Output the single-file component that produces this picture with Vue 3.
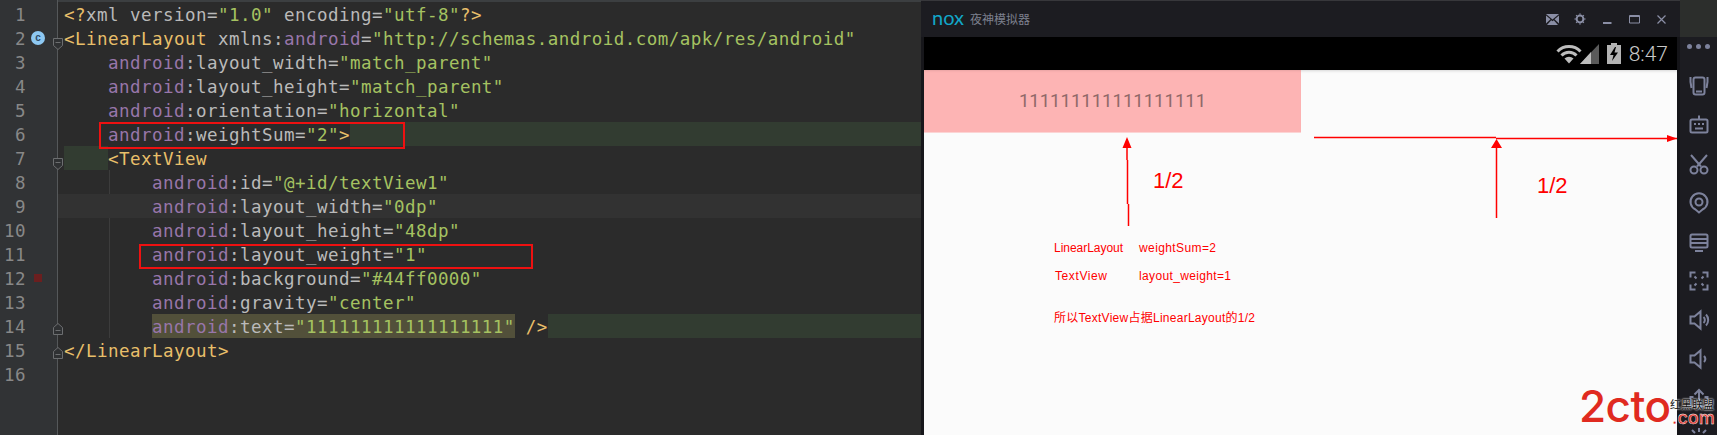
<script setup>
const a = 'android'
const attr = (name, value) => [['at', a], ['pl', ':' + name + '='], ['st', '"' + value + '"']]
const lines = [
  { t: [['tg', '<?'], ['pl', 'xml version='], ['st', '"1.0"'], ['pl', ' encoding='], ['st', '"utf-8"'], ['tg', '?>']] },
  { t: [['tg', '<LinearLayout'], ['pl', ' xmlns:'], ['at', a], ['pl', '='], ['st', '"http://schemas.android.com/apk/res/android"']] },
  { i: 4, t: attr('layout_width', 'match_parent') },
  { i: 4, t: attr('layout_height', 'match_parent') },
  { i: 4, t: attr('orientation', 'horizontal') },
  { i: 4, t: [...attr('weightSum', '2'), ['tg', '>']], fill: true },
  { i: 4, mark: true, t: [['tg', '<TextView']] },
  { i: 8, t: attr('id', '@+id/textView1') },
  { i: 8, t: attr('layout_width', '0dp'), caret: true },
  { i: 8, t: attr('layout_height', '48dp') },
  { i: 8, t: attr('layout_weight', '1') },
  { i: 8, t: attr('background', '#44ff0000') },
  { i: 8, t: attr('gravity', 'center') },
  { i: 8, t: attr('text', '111111111111111111'), olive: true, tail: ' />', fill: true },
  { t: [['tg', '</LinearLayout>']] },
  { t: [] }
]
const sidebar = ['vibrate', 'robot', 'scissors', 'pin', 'screen', 'full', 'volup', 'voldown', 'upload', 'shake']
</script>

<template>
  <div class="root">
    <section class="editor">
      <div class="gutter">
        <div v-for="(l, n) in lines" :key="n" class="num">
          <span class="num-text">{{ n + 1 }}</span>
          <span v-if="n === 1" class="class-badge">c</span>
          <span v-if="n === 11" class="swatch"></span>
          <svg v-if="n === 1 || n === 6" class="fold" viewBox="0 0 10 12"><path d="M.5.5h9v7L5 11.5.5 7.5z M2.5 4.5h5" /></svg>
          <svg v-if="n === 13 || n === 14" class="fold fold-end" viewBox="0 0 10 12"><path d="M.5 11.5h9v-7L5 .5.5 4.5z M2.5 7.5h5" /></svg>
        </div>
      </div>
      <div class="code">
        <span class="guide"></span>
        <div v-for="(l, n) in lines" :key="n" class="row" :class="{ caret: l.caret }">
          <span v-if="l.i" class="indent" :class="{ green: l.mark }">{{ ' '.repeat(l.i) }}</span>
          <span :class="{ olive: l.olive }"><span v-for="(tok, k) in l.t" :key="k" :class="tok[0]">{{ tok[1] }}</span></span>
          <span v-if="l.tail" class="tg">{{ l.tail }}</span>
          <span v-if="l.fill" class="fill"></span>
        </div>
        <span class="redbox box-one"></span>
        <span class="redbox box-two"></span>
      </div>
    </section>

    <section class="emu">
      <div class="top">
        <header class="titlebar">
          <span class="nox">nox</span>
          <span class="title">夜神模拟器</span>
          <div class="controls">
            <svg class="mail" width="13" height="11" viewBox="0 0 13 11"><path class="solid" d="M0 0h13L6.5 5.5zM0 1.5v8l4.5-4.2zM13 1.5v8L8.500 5.300zM1 11h11L7.800 6.300 6.500 7.300 5.200 6.300z" /></svg>
            <svg width="12" height="12" viewBox="0 0 12 12"><circle cx="6" cy="6" r="3.400" class="line" stroke-width="2" /><path class="line" stroke-width="1.500" stroke-dasharray="1.500 1.200" d="M6 .6v1M6 10.400v1M.6 6h1M10.400 6h1M2.200 2.200l.8.8M9 9l.8.800M2.200 9.800L3 9M9 3l.8-.8" /></svg>
            <svg width="9" height="9" viewBox="0 0 9 9"><path class="solid" d="M0 7h8.500v2H0z" /></svg>
            <svg width="11" height="9" viewBox="0 0 11 9"><path class="line" stroke-width="1" d="M.5.500h10v7.500H.500z M.5 1.500h10" /></svg>
            <svg width="9" height="9" viewBox="0 0 9 9"><path class="line" stroke-width="1.200" d="M.5.500l8 8M8.500.500l-8 8" /></svg>
          </div>
        </header>
        <div class="corner"></div>
      </div>
      <div class="body">
        <div class="edge"></div>
        <main class="device">
          <div class="status">
            <svg width="26" height="20" viewBox="0 0 26 20">
              <path class="wifi" d="M1.500 7.500a16 16 0 0 1 23 0M5.500 11.500a10.500 10.500 0 0 1 15 0" />
              <path class="wifi-fill" d="M13 19.500l-4.500-5a6.500 6.500 0 0 1 9 0z" />
            </svg>
            <svg class="signal" width="20" height="20" viewBox="0 0 20 20">
              <path fill="#5a5a5a" d="M19 0v20H0z" />
              <path fill="#bdbdbd" d="M11 8v12H0z" />
            </svg>
            <svg class="battery" width="14" height="21" viewBox="0 0 14 21">
              <path fill="#b4b4b4" d="M4 0h6v2h4v19H0V2h4z" />
              <path fill="#000" d="M8 4L3 12h3.500L5 18l6-8.500H7.500L9 4z" />
            </svg>
            <span class="clock">8:47</span>
          </div>
          <div class="screen">
            <div class="pink"><span>111111111111111111</span></div>
            <svg class="notes" viewBox="924 70 753 365" width="753" height="365">
              <g class="arrow">
                <path d="M1127 146v14M1127.500 160v44M1128.500 204v22M1314 137.500h182M1496 138.500h181M1496.500 147v71" />
              </g>
              <path class="head" d="M1127 137l4.500 11h-9zM1496.500 139l5.500 9h-11zM1677 138.500l-10 3.500v-7z" />
              <text class="big" x="1153" y="188">1/2</text>
              <text class="big" x="1537" y="193">1/2</text>
              <text class="small" x="1054" y="252" textLength="69">LinearLayout</text>
              <text class="small" x="1139" y="252" textLength="77">weightSum=2</text>
              <text class="small" x="1055" y="280" textLength="52">TextView</text>
              <text class="small" x="1139" y="280" textLength="92">layout_weight=1</text>
              <text class="small" x="1054" y="322" textLength="201">所以TextView占据LinearLayout的1/2</text>
            </svg>
          </div>
        </main>
        <aside class="sidebar">
          <div class="dots"><i></i><i></i><i></i></div>
          <div v-for="name in sidebar" :key="name" class="tool">
            <svg width="24" height="24" viewBox="0 0 24 24">
              <g v-if="name === 'vibrate'"><rect x="6.500" y="3.500" width="11" height="17" rx="2" /><path d="M3.500 3v5l1 6M20.500 3v5l-1 6M9 17.500h6" /></g>
              <g v-else-if="name === 'robot'"><rect x="3.500" y="6.500" width="17" height="13" rx="1.500" /><path d="M12 2.500v4M7 11h2M11 11h2M15 11h2M8 15.500h8" /></g>
              <g v-else-if="name === 'scissors'"><circle cx="7" cy="18" r="3.500" /><circle cx="17" cy="18" r="3.500" /><path d="M4 3l10 11.500M20 3L10 14.500" /></g>
              <g v-else-if="name === 'pin'"><path d="M12 21.500l-3.500-3a8.500 8.500 0 1 1 7 0z" /><circle cx="12" cy="11" r="3.500" /></g>
              <g v-else-if="name === 'screen'"><rect x="3.500" y="4.500" width="17" height="13" rx="1.500" /><path d="M3.500 9h17M3.500 13h17M8 21h8" /></g>
              <g v-else-if="name === 'full'"><path d="M3.500 8.500v-5h5M15.500 3.500h5v5M20.500 15.500v5h-5M8.500 20.500h-5v-5M7.500 7.500l2 2M16.500 7.500l-2 2M16.500 16.500l-2-2M7.500 16.500l2-2" /></g>
              <g v-else-if="name === 'volup'"><path d="M3.500 8.500h4l6-5v17l-6-5h-4zM16.500 9a4 4 0 0 1 0 6M19 6.500a8 8 0 0 1 0 11" /></g>
              <g v-else-if="name === 'voldown'"><path d="M3.500 8.500h4l6-5v17l-6-5h-4zM17 9a4.500 4.500 0 0 1 0 6" /></g>
              <g v-else-if="name === 'upload'"><path d="M12 16V4M7.500 8.500L12 4l4.500 4.500M6.500 11h-3v9.500h17V11h-3" /></g>
              <g v-else><path d="M12 3v4M5 5l3 3M19 5l-3 3" /></g>
            </svg>
          </div>
        </aside>
      </div>
    </section>

    <div class="watermark">
      <span class="brand">2cto</span>
      <span class="union">红黑联盟</span>
      <span class="dotcom">.com</span>
    </div>
  </div>
</template>

<style>
html, body { margin: 0; background: #2b2b2b; }
</style>

<style scoped>
.root {
  position: relative;
  display: flex;
  width: 1717px;
  height: 435px;
  overflow: hidden;
  background: #2b2b2b;
}

/* editor */
.editor {
  display: flex;
  width: 921px;
  flex: none;
  box-sizing: border-box;
  padding-top: 2px;
  background: linear-gradient(#3c3f41 0 2px, #2b2b2b 2px);
  font: 17.5px/26px "DejaVu Sans Mono", monospace;
  letter-spacing: 0.46px;
}
.gutter {
  width: 57px;
  flex: none;
  margin-top: -2px;
  padding-top: 2px;
  background: #313335;
  border-right: 1px solid #55585a;
  color: #888888;
}
.num {
  position: relative;
  height: 24px;
}
.num-text {
  display: block;
  width: 26px;
  text-align: right;
}
.class-badge {
  position: absolute;
  left: 31px;
  top: 5px;
  width: 14px;
  height: 14px;
  border-radius: 50%;
  background: #8dc8f2;
  color: #2c4a66;
  font: bold 10px/13px "Liberation Sans", sans-serif;
  letter-spacing: 0;
  text-align: center;
}
.swatch {
  position: absolute;
  left: 34px;
  top: 8px;
  width: 8px;
  height: 8px;
  background: #6b1f1f;
}
.fold {
  position: absolute;
  left: 53px;
  top: 12px;
  width: 10px;
  height: 12px;
  fill: #2f3133;
  stroke: #6c6e70;
  stroke-width: 1;
}
.fold-end {
  top: 9px;
}
.code {
  position: relative;
  flex: 1;
  min-width: 0;
  white-space: pre;
}
.guide {
  position: absolute;
  left: 51px;
  top: 168px;
  width: 1px;
  height: 168px;
  background: #3c3c3c;
}
.row {
  position: relative;
  display: flex;
  height: 24px;
  padding-left: 6px;
}
.row.caret {
  background: #323232;
}
.indent {
  display: block;
  height: 24px;
}
.green, .fill {
  background: #323c31;
}
.fill {
  flex: 1;
  height: 24px;
}
.olive {
  display: block;
  height: 24px;
  background: #52503a;
}
.tg { color: #e8bf6a; }
.pl { color: #bababa; }
.at { color: #9876aa; }
.st { color: #a5c261; }
.redbox {
  position: absolute;
  box-sizing: border-box;
  border: 2px solid #ee1111;
}
.box-one {
  left: 41px;
  top: 120px;
  width: 306px;
  height: 27px;
}
.box-two {
  left: 81px;
  top: 242px;
  width: 394px;
  height: 25px;
}

/* emulator */
.emu {
  display: flex;
  flex-direction: column;
  flex: 1;
  min-width: 0;
}
.top {
  display: flex;
  height: 37px;
  flex: none;
}
.titlebar {
  display: flex;
  align-items: center;
  width: 759px;
  box-sizing: border-box;
  padding: 0 14px 0 11px;
  background: #1c1c21;
  border-top: 1px solid #37373b;
}
.nox {
  width: 32px;
  color: #12a6c8;
  font: 400 20px/24px Lato, sans-serif;
  margin-top: -4px;
}
.title {
  margin-left: 6px;
  color: #7d808e;
  font: 12px/16px "Noto Sans CJK SC", sans-serif;
}
.controls {
  display: flex;
  align-items: center;
  margin-left: auto;
  gap: 17px;
}
.mail { margin-right: -2px; }
.solid { fill: #8a8ea5; }
.line { fill: none; stroke: #8a8ea5; }
.corner {
  flex: 1;
  background: #2c2e2c;
}
.body {
  display: flex;
  flex: 1;
  min-height: 0;
}
.edge {
  width: 3px;
  flex: none;
  background: #17171b;
}
.device {
  display: flex;
  flex-direction: column;
  width: 753px;
  flex: none;
}
.status {
  display: flex;
  align-items: center;
  justify-content: flex-end;
  height: 33px;
  flex: none;
  box-sizing: border-box;
  padding: 0 9px 0 0;
  background: #000;
}
.wifi {
  fill: none;
  stroke: #bdbdbd;
  stroke-width: 3;
}
.wifi-fill { fill: #bdbdbd; }
.signal { margin-left: -2px; }
.battery { margin-left: 7px; }
.clock {
  margin-left: 8px;
  color: #c8c8c8;
  font: 300 21px/26px Roboto, sans-serif;
}
.screen {
  position: relative;
  flex: 1;
  background: #fbfbfb;
  box-shadow: inset 0 3px 3px -2px #d6d6d6;
}
.pink {
  display: flex;
  align-items: center;
  justify-content: center;
  width: 377px;
  height: 62px;
  background: #fdb4b4;
  box-shadow: inset 0 2px 2px -1px #e8a4a4, 0 1px 0 #fcd4d4;
  color: #8f6868;
  font: 18.5px/24px Roboto, sans-serif;
}
.notes {
  position: absolute;
  left: 0;
  top: 0;
}
.arrow path {
  fill: none;
  stroke: #ff0000;
  stroke-width: 1.500;
}
.head { fill: #ff0000; }
.big {
  fill: #ff0000;
  font: 22px "Liberation Sans", sans-serif;
}
.small {
  fill: #ff0000;
  font: 12px "Liberation Sans", "Noto Sans CJK SC", sans-serif;
}
.sidebar {
  flex: 1;
  display: flex;
  flex-direction: column;
  align-items: center;
  overflow: hidden;
  background: linear-gradient(90deg, #141418 3px, #1c1c21 3px);
  padding-left: 3px;
}
.dots {
  display: flex;
  align-items: center;
  gap: 4px;
  height: 18px;
  margin-bottom: 11px;
  flex: none;
}
.dots i {
  width: 5px;
  height: 5px;
  border-radius: 50%;
  background: #7d829c;
}
.tool {
  display: flex;
  align-items: center;
  justify-content: center;
  height: 39px;
  flex: none;
}
.tool svg {
  fill: none;
  stroke: #7d829c;
  stroke-width: 2;
}

/* watermark */
.watermark {
  position: absolute;
  left: 1579px;
  top: 382px;
  width: 138px;
  height: 53px;
}
.brand {
  position: absolute;
  left: 0;
  top: 0;
  color: #e02a20;
  font: 500 44px/48px Inter, sans-serif;
  letter-spacing: -0.5px;
}
.union {
  position: absolute;
  left: 91px;
  top: 17px;
  color: #111;
  font: 11px/11px "Noto Sans CJK SC", sans-serif;
  text-shadow: 0 0 2px #fff, 0 0 2px #fff;
}
.dotcom {
  position: absolute;
  left: 93px;
  top: 28px;
  color: #e02a20;
  font: 500 18px/16px Inter, sans-serif;
  -webkit-text-stroke: 0.4px #fff;
}
</style>
